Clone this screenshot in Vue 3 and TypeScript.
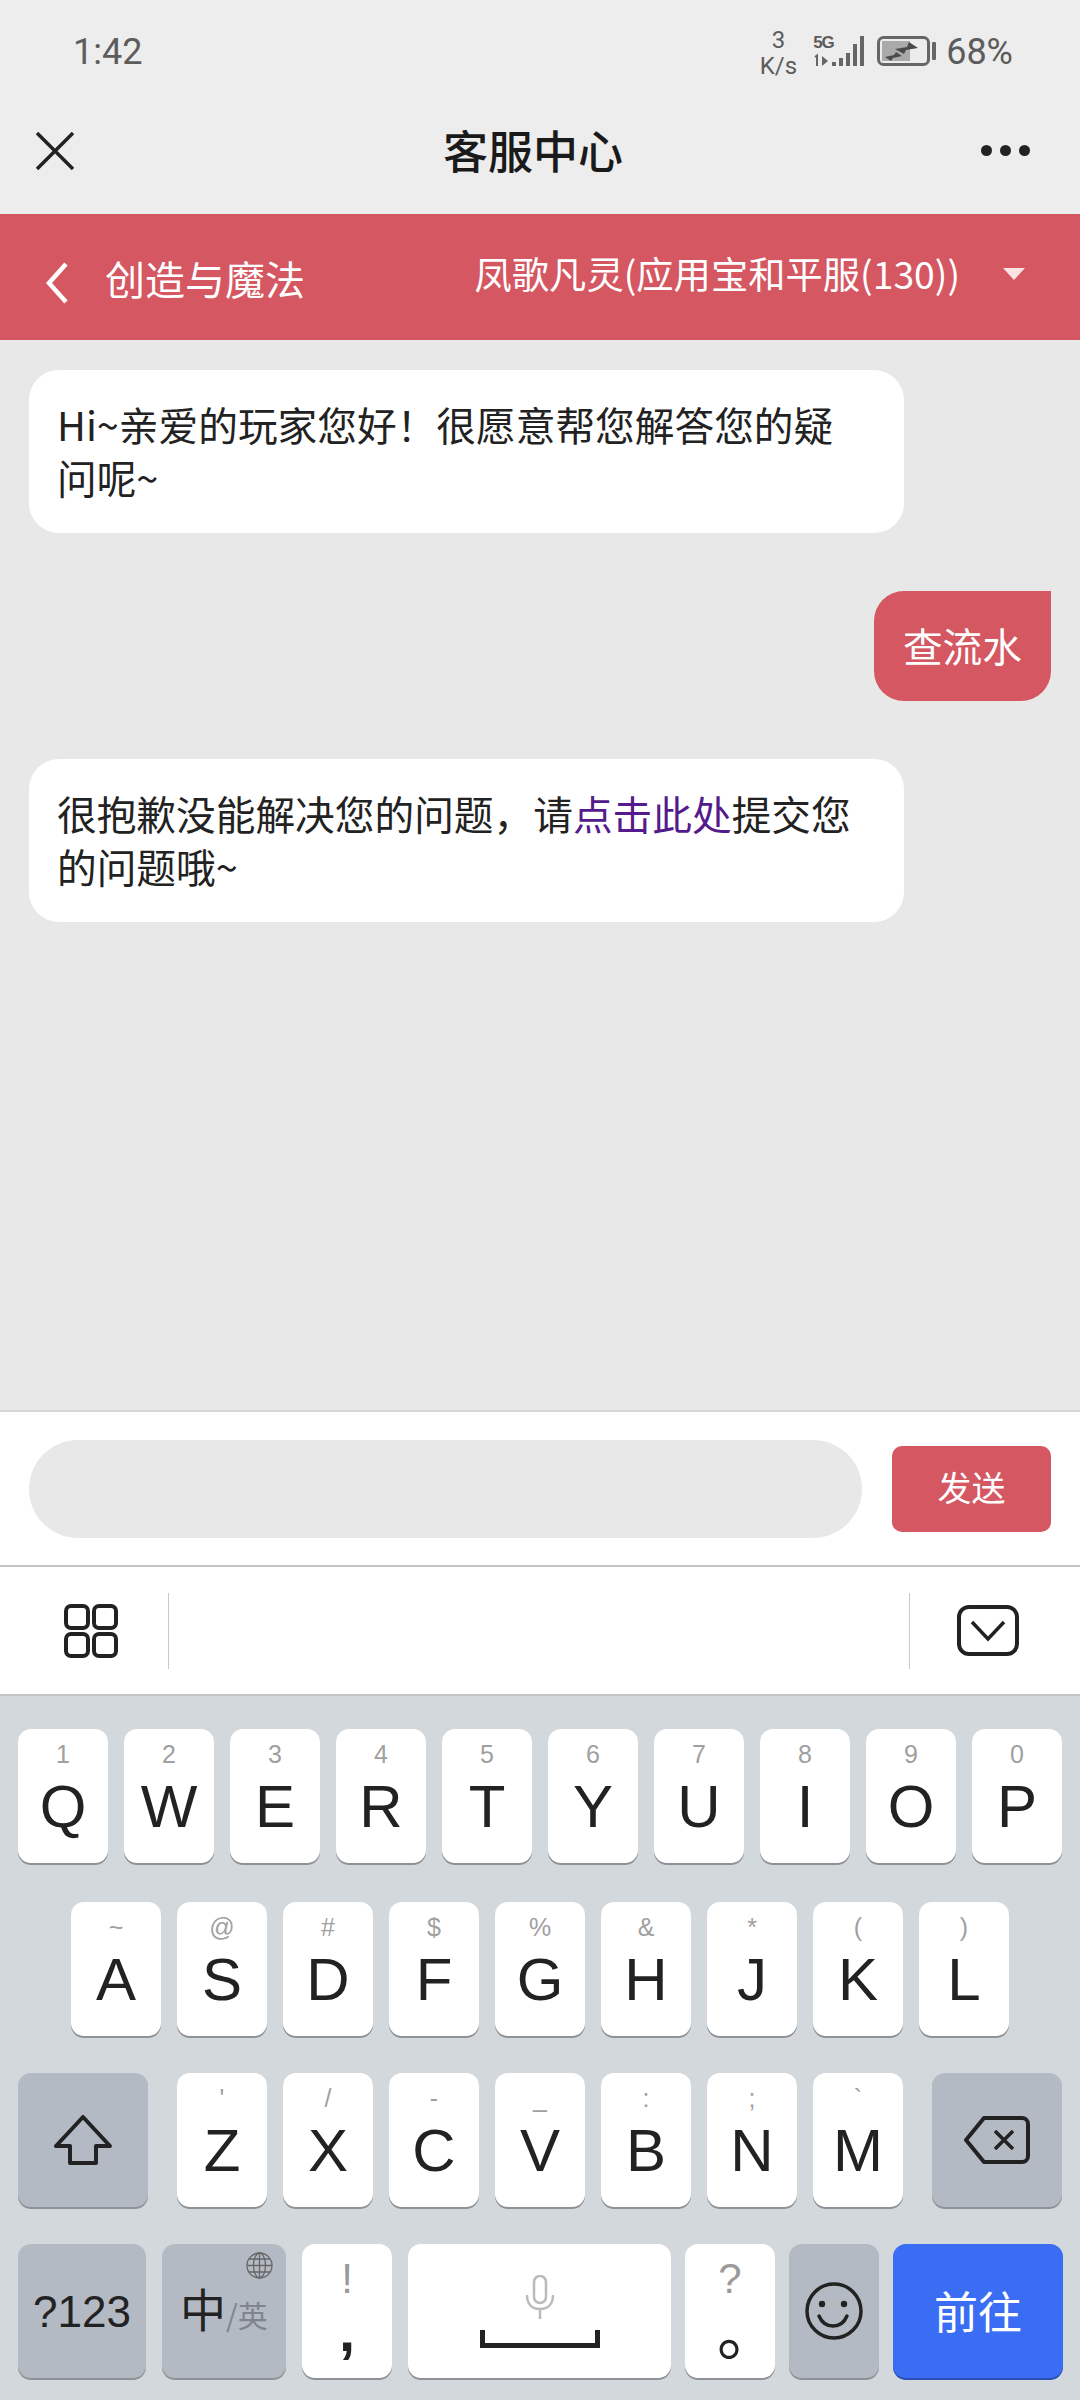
<template>
  <div class="page">
    <div class="top">
      <div class="status">
        <span class="clock">1:42</span>
        <div class="status-right">
          <div class="speed"><span>3</span><span>K/s</span></div>
          <div class="signal">
            <span class="five-g">5G</span>
            <svg class="bars" width="52" height="32" viewBox="0 0 52 32">
              <path d="M2 21l2-1.500v10.500" stroke="#666" stroke-width="2" fill="none" />
              <path d="M9 20v10l6-5z" fill="#666" />
              <rect x="19" y="26" width="4" height="4" fill="#666" />
              <rect x="26" y="22" width="4" height="8" fill="#666" />
              <rect x="33" y="17" width="4" height="13" fill="#666" />
              <rect x="40" y="8" width="4" height="22" fill="#666" />
              <rect x="47" y="0" width="4" height="30" fill="#666" />
            </svg>
          </div>
          <svg class="battery" width="60" height="32" viewBox="0 0 60 32">
            <rect x="1.500" y="1.500" width="50" height="27" rx="5" fill="none" stroke="#666" stroke-width="3" />
            <rect x="5" y="5" width="28" height="20" fill="#aaa" />
            <path d="M18 13L30 11L32 6L41 12L29 14L27 18z" fill="#4a4a4a" />
            <path d="M8 21L17 19L19 16L25 20L16 22L14 25z" fill="#4a4a4a" />
            <rect x="55" y="6" width="4" height="18" rx="1" fill="#666" />
          </svg>
          <span class="percent">68%</span>
        </div>
      </div>
      <div class="nav">
        <svg width="38" height="38" viewBox="0 0 38 38">
          <path d="M1 1l36 36M37 1L1 37" stroke="#222" stroke-width="3.500" fill="none" />
        </svg>
        <div class="nav-title">客服中心</div>
        <div class="dots"><i></i><i></i><i></i></div>
      </div>
    </div>

    <div class="game-bar">
      <svg class="back" width="24" height="42" viewBox="0 0 24 42">
        <path d="M21 2L4 21l17 19" stroke="#fff" stroke-width="4.500" fill="none" />
      </svg>
      <span class="game-name">创造与魔法</span>
      <div class="server">
        <span>凤歌凡灵(应用宝和平服(130))</span>
        <i class="caret"></i>
      </div>
    </div>

    <div class="messages">
      <div class="bubble left">Hi~亲爱的玩家您好！很愿意帮您解答您的疑问呢~</div>
      <div class="bubble right">查流水</div>
      <div class="bubble left">很抱歉没能解决您的问题，请<span class="link">点击此处</span>提交您的问题哦~</div>
    </div>

    <div class="input-bar">
      <div class="input"></div>
      <div class="send">发送</div>
    </div>

    <div class="toolbar">
      <svg class="grid-icon" width="54" height="54" viewBox="0 0 54 54">
        <rect v-for="r in gridCells" :key="r.x + '-' + r.y" :x="r.x" :y="r.y" width="22" height="22" rx="5" fill="none" stroke="#222" stroke-width="4" />
      </svg>
      <div class="sep"></div>
      <div class="spacer"></div>
      <div class="sep"></div>
      <svg class="hide-icon" width="62" height="52" viewBox="0 0 62 52">
        <rect x="2" y="2" width="58" height="47" rx="10" fill="none" stroke="#222" stroke-width="4" />
        <path d="M15 17l16 17 16-17" fill="none" stroke="#222" stroke-width="3.500" />
      </svg>
    </div>

    <div class="keyboard">
      <div class="row row1">
        <div v-for="k in row1" :key="k[0]" class="key letter">
          <span class="hint">{{ k[1] }}</span><span class="cap">{{ k[0] }}</span>
        </div>
      </div>
      <div class="row row2">
        <div v-for="k in row2" :key="k[0]" class="key letter">
          <span class="hint">{{ k[1] }}</span><span class="cap">{{ k[0] }}</span>
        </div>
      </div>
      <div class="row row3">
        <div class="key gray wide">
          <svg width="58" height="50" viewBox="0 0 58 50">
            <path d="M29 2L2 31h14v17h26V31h14z" fill="none" stroke="#222" stroke-width="4" stroke-linejoin="round" />
          </svg>
        </div>
        <div class="letters">
          <div v-for="k in row3" :key="k[0]" class="key letter">
            <span class="hint">{{ k[1] }}</span><span class="cap">{{ k[0] }}</span>
          </div>
        </div>
        <div class="key gray wide">
          <svg width="66" height="48" viewBox="0 0 66 48">
            <path d="M20 2h38a6 6 0 0 1 6 6v32a6 6 0 0 1-6 6H20L2 24z" fill="none" stroke="#222" stroke-width="4" stroke-linejoin="round" />
            <path d="M31 15l18 18M49 15L31 33" fill="none" stroke="#222" stroke-width="3.500" />
          </svg>
        </div>
      </div>
      <div class="row row4">
        <div class="key gray num">?123</div>
        <div class="key gray lang">
          <svg class="globe" width="27" height="27" viewBox="0 0 27 27">
            <g fill="none" stroke="#666" stroke-width="1.300">
              <circle cx="13.500" cy="13.500" r="12.500" />
              <ellipse cx="13.500" cy="13.500" rx="6" ry="12.500" />
              <path d="M13.500 1v25M1 13.500h25M3 7h21M3 20h21" />
            </g>
          </svg>
          <span class="zh">中</span><span class="en">/英</span>
        </div>
        <div class="key punct comma-key"><span class="big-hint">!</span><span class="mark">,</span></div>
        <div class="key space">
          <svg class="mic" width="30" height="46" viewBox="0 0 30 46">
            <rect x="9" y="1" width="12" height="27" rx="6" fill="none" stroke="#bbb" stroke-width="2.500" />
            <path d="M2 20c0 9 5 14 13 14s13-5 13-14M15 34v10" fill="none" stroke="#bbb" stroke-width="2.500" />
          </svg>
          <svg class="bar" width="120" height="18" viewBox="0 0 120 18">
            <path d="M2.500 0v15.500h115V0" fill="none" stroke="#222" stroke-width="5" />
          </svg>
        </div>
        <div class="key punct"><span class="big-hint">?</span><span class="ring">。</span></div>
        <div class="key gray emoji">
          <svg width="58" height="58" viewBox="0 0 58 58">
            <circle cx="29" cy="29" r="27" fill="none" stroke="#222" stroke-width="3.500" />
            <circle cx="17" cy="22" r="3.200" fill="#222" />
            <circle cx="39" cy="22" r="3.200" fill="#222" />
            <path d="M14 34c3 7 8 10 14 10s11-3 14-10" fill="none" stroke="#222" stroke-width="3.500" stroke-linecap="round" />
          </svg>
        </div>
        <div class="key go">前往</div>
      </div>
    </div>
  </div>
</template>

<script setup lang="ts">
const gridCells = [
  { x: 2, y: 2 },
  { x: 30, y: 2 },
  { x: 2, y: 30 },
  { x: 30, y: 30 },
]

const row1 = [['Q', '1'], ['W', '2'], ['E', '3'], ['R', '4'], ['T', '5'], ['Y', '6'], ['U', '7'], ['I', '8'], ['O', '9'], ['P', '0']]
const row2 = [['A', '~'], ['S', '@'], ['D', '#'], ['F', '$'], ['G', '%'], ['H', '&'], ['J', '*'], ['K', '('], ['L', ')']]
const row3 = [['Z', "'"], ['X', '/'], ['C', '-'], ['V', '_'], ['B', ':'], ['N', ';'], ['M', '`']]
</script>

<style>
html, body {
  margin: 0;
  background: #e8e8e8;
}
</style>

<style scoped>
.page {
  width: 1080px;
  height: 2400px;
  display: flex;
  flex-direction: column;
  overflow: hidden;
  font-family: "Noto Sans CJK SC", "Liberation Sans", sans-serif;
  color: #222;
  background: #e8e8e8;
}

.top {
  background: #ededed;
  height: 214px;
  flex: none;
}
.status {
  height: 87px;
  padding: 16px 67px 0 73px;
  box-sizing: border-box;
  display: flex;
  align-items: center;
  justify-content: space-between;
  color: #5c5c5c;
  font-family: Roboto, sans-serif;
}
.clock {
  font-size: 36px;
}
.status-right {
  display: flex;
  align-items: center;
}
.speed {
  display: flex;
  flex-direction: column;
  align-items: center;
  font-size: 24px;
  line-height: 26px;
  margin-top: 2px;
  margin-right: 16px;
}
.signal {
  position: relative;
  width: 52px;
  height: 32px;
  margin-right: 12px;
}
.five-g {
  position: absolute;
  left: 0;
  top: -2px;
  font-size: 17px;
  line-height: 18px;
  font-weight: 700;
  letter-spacing: -1px;
  font-family: "Liberation Sans", sans-serif;
}
.bars {
  display: block;
}
.battery {
  margin-right: 9px;
}
.percent {
  font-size: 36px;
}

.nav {
  height: 127px;
  padding: 0 50px 0 36px;
  display: grid;
  grid-template-columns: 1fr auto 1fr;
  align-items: center;
}
.nav-title {
  font-size: 45px;
  font-weight: 500;
  color: #1a1a1a;
  padding-bottom: 3px;
}
.dots {
  justify-self: end;
  display: flex;
  gap: 8px;
}
.dots i {
  width: 11px;
  height: 11px;
  border-radius: 50%;
  background: #222;
}

.game-bar {
  flex: none;
  height: 126px;
  background: #d45762;
  color: #fff;
  display: flex;
  align-items: center;
  padding: 0 55px 0 45px;
}
.back {
  flex: none;
  margin-top: 12px;
}
.game-name {
  margin-left: 36px;
  font-size: 40px;
  margin-top: 2px;
}
.server {
  margin-left: auto;
  display: flex;
  align-items: center;
  font-size: 37.300px;
  margin-bottom: 9px;
}
.caret {
  margin-left: 43px;
  margin-top: 3px;
  width: 0;
  height: 0;
  border-left: 11px solid transparent;
  border-right: 11px solid transparent;
  border-top: 12px solid #fbe3e5;
}

.messages {
  flex: 1;
  min-height: 0;
  padding: 30px 29px 0;
  display: flex;
  flex-direction: column;
  gap: 58px;
}
.bubble {
  font-size: 39.700px;
  line-height: 53px;
  border-radius: 30px;
}
.bubble.left {
  width: 875px;
  box-sizing: border-box;
  padding: 26.500px 50px 30.500px 28px;
  background: #fff;
  color: #222;
}
.bubble.right {
  align-self: flex-end;
  padding: 26.500px 29px 30.500px;
  background: #d45762;
  color: #fff;
  border-top-right-radius: 0;
}
.link {
  color: #551a8b;
}

.input-bar {
  flex: none;
  height: 153px;
  border-top: 2px solid #d6d6d6;
  background: #fff;
  display: flex;
  align-items: center;
  padding: 0 29px;
}
.input {
  flex: 1;
  height: 98px;
  border-radius: 49px;
  background: #e8e8e8;
}
.send {
  margin-left: 30px;
  width: 159px;
  height: 86px;
  border-radius: 10px;
  background: #d45762;
  color: #fff;
  font-size: 34px;
  padding-bottom: 5px;
  box-sizing: border-box;
  display: flex;
  align-items: center;
  justify-content: center;
}

.toolbar {
  flex: none;
  height: 127px;
  background: #fff;
  border-top: 2px solid #c4c4c4;
  border-bottom: 2px solid #c4c4c4;
  display: flex;
  align-items: center;
}
.grid-icon {
  margin-left: 64px;
  flex: none;
}
.sep {
  width: 1px;
  height: 76px;
  background: #c8c8c8;
}
.grid-icon + .sep {
  margin-left: 50px;
}
.spacer {
  flex: 1;
}
.hide-icon {
  margin: 0 61px 0 47px;
  flex: none;
}

.keyboard {
  flex: none;
  height: 704px;
  box-sizing: border-box;
  background: #d3d8dc;
  padding-top: 33px;
  font-family: "Liberation Sans", "Noto Sans CJK SC", sans-serif;
}
.row {
  display: flex;
  justify-content: center;
  gap: 16px;
}
.row1 {
  margin-bottom: 39px;
}
.row2 {
  margin-bottom: 37px;
}
.row3 {
  gap: 29px;
  margin-bottom: 37px;
}
.row4 {
  gap: 14px;
  justify-content: flex-start;
  padding-left: 18px;
}
.letters {
  display: flex;
  gap: 16px;
}
.key {
  height: 134px;
  border-radius: 13px;
  background: #fff;
  box-shadow: 0 2px 0 #8e9196;
  display: flex;
  flex-direction: column;
  align-items: center;
  justify-content: center;
  flex: none;
}
.letter {
  width: 90px;
  justify-content: flex-start;
  padding-top: 9px;
  box-sizing: border-box;
}
.hint {
  font-size: 25px;
  line-height: 32px;
  height: 32px;
  color: #a0a0a0;
}
.cap {
  font-size: 60px;
  line-height: 70px;
  margin-top: 2px;
  color: #222;
}
.gray {
  background: #b4bac4;
}
.wide {
  width: 130px;
}
.num {
  width: 128px;
  font-size: 44px;
  padding-top: 2px;
  box-sizing: border-box;
}
.lang {
  position: relative;
  width: 124px;
  margin-left: 2px;
  flex-direction: row;
  align-items: baseline;
  padding-top: 30px;
  box-sizing: border-box;
}
.globe {
  position: absolute;
  top: 8px;
  right: 13px;
}
.zh {
  font-size: 46px;
  font-family: "Noto Sans CJK SC", sans-serif;
}
.en {
  font-size: 30px;
  color: #80858d;
  font-family: "Noto Sans CJK SC", sans-serif;
}
.punct {
  width: 90px;
  justify-content: flex-start;
  box-sizing: border-box;
  padding-top: 12px;
}
.comma-key {
  margin-left: 2px;
}
.big-hint {
  font-size: 42px;
  line-height: 46px;
  color: #9a9a9a;
}
.mark {
  margin-top: 4px;
  font-size: 58px;
  line-height: 50px;
  font-weight: 700;
  color: #222;
}
.ring {
  font-family: "Noto Sans CJK SC", sans-serif;
  font-size: 62px;
  line-height: 62px;
  width: 26px;
  margin-top: -5px;
  color: #222;
}
.space {
  width: 263px;
  margin-left: 2px;
  justify-content: flex-start;
  padding-top: 31px;
  box-sizing: border-box;
}
.mic {
  display: block;
}
.bar {
  display: block;
  margin-top: 9px;
}
.emoji {
  width: 90px;
}
.go {
  width: 170px;
  background: #3a6cf4;
  box-shadow: 0 2px 0 #2b50b5;
  color: #fff;
  font-size: 44px;
  padding-bottom: 3px;
  box-sizing: border-box;
  font-family: "Noto Sans CJK SC", sans-serif;
}
</style>
